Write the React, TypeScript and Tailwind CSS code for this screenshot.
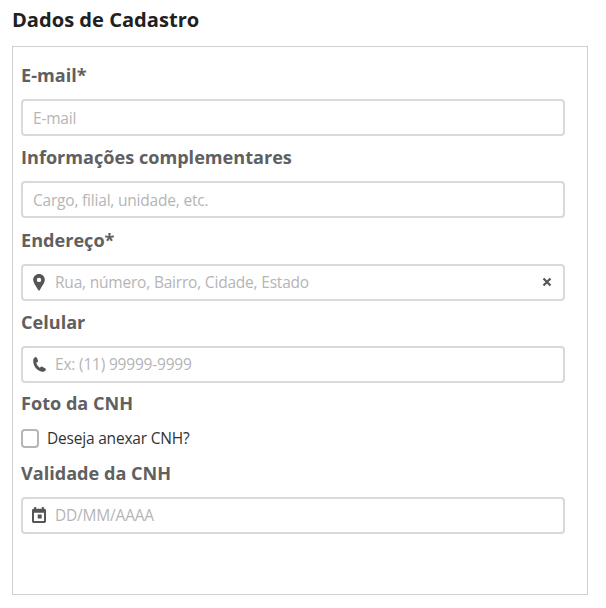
import React from 'react';

type IconName = 'pin' | 'phone' | 'calendar';

interface TextFieldProps {
  id: string;
  label: string;
  placeholder: string;
  icon?: IconName;
  clearable?: boolean;
}

const icons: Record<IconName, React.ReactNode> = {
  pin: (
    <svg viewBox="0 0 12 17" className="h-[17px] w-3" fill="#555555">
      <path fillRule="evenodd" d="M6 0C2.7 0 .2 2.500.2 5.700.2 9 3 11.600 4.700 15.300L6 17l1.300-1.700C9 11.600 11.800 9 11.800 5.700 11.800 2.500 9.300 0 6 0Zm0 3.700a2.200 2.200 0 1 1 0 4.400 2.200 2.200 0 0 1 0-4.400Z" />
    </svg>
  ),
  phone: (
    <svg viewBox="0 0 13 15" className="h-[15px] w-[13px]" fill="#555555">
      <path d="M2.700.1 4 .8l1 3c.1.600-.1 1-.5 1.200l-1.200.7c.5 2.100 1.700 3.900 3.500 5l1.200-.9c.4-.3.8-.3 1.200 0l3.200 1.700c.5.300.6.700.4 1.200-.7 1.500-1.900 2.200-3.600 2C4.400 14.100.4 9.500.2 4 .1 2 1.100.600 2.700.1Z" />
    </svg>
  ),
  calendar: (
    <svg viewBox="0 0 14 16" className="-ml-[1px] h-4 w-3.5" fill="#555555">
      <path fillRule="evenodd" d="M2.200 0h2v1.700h5.600V0h2v1.700h.5c1 0 1.700.7 1.700 1.700v10.900c0 1-.7 1.700-1.700 1.700H1.700C.7 16 0 15.300 0 14.300V3.400c0-1 .7-1.700 1.700-1.700h.5V0ZM2 5.800V14h10V5.800H2Zm3.700 1.700h4v4h-4v-4Z" />
    </svg>
  ),
};

function FieldLabel({ htmlFor, children }: { htmlFor: string; children: React.ReactNode }) {
  return (
    <label htmlFor={htmlFor} className="block h-6 text-[18.1px] leading-6 font-[680] text-[#606060]">
      {children}
    </label>
  );
}

function TextField({ id, label, placeholder, icon, clearable }: TextFieldProps) {
  return (
    <div>
      <FieldLabel htmlFor={id}>{label}</FieldLabel>
      <div className="mt-3 flex h-[37px] items-center rounded-[4px] border-2 border-[#d9d9d9] px-2.5">
        {icon && <span className="mr-2 flex w-3.5 shrink-0">{icons[icon]}</span>}
        <input
          id={id}
          type="text"
          placeholder={placeholder}
          className="min-w-0 flex-1 bg-transparent text-[15.5px] leading-5 tracking-[-0.2px] text-[#333333] outline-none placeholder:text-[#b5b5b5]"
        />
        {clearable && (
          <button type="button" aria-label="Limpar" className="mr-[1px]">
            <svg viewBox="0 0 10 10" className="h-2.5 w-2.5" stroke="#555555" strokeWidth="2.2">
              <path d="M1.500 1.500l7 7M8.500 1.500l-7 7" />
            </svg>
          </button>
        )}
      </div>
    </div>
  );
}

function App() {
  return (
    <div className="h-[608px] bg-white px-3 pt-2 font-['Open_Sans',sans-serif]">
      <h1 className="h-[38px] text-[20.1px] leading-[23px] font-[680] text-[#212121]">Dados de Cadastro</h1>

      <form className="flex h-[549px] w-[576px] flex-col gap-[9.25px] border border-[#d0d0d0] pt-4 pr-[22px] pl-2">
        <TextField id="email" label="E-mail*" placeholder="E-mail" />
        <TextField id="info" label="Informações complementares" placeholder="Cargo, filial, unidade, etc." />
        <TextField id="endereco" label="Endereço*" placeholder="Rua, número, Bairro, Cidade, Estado" icon="pin" clearable />
        <TextField id="celular" label="Celular" placeholder="Ex: (11) 99999-9999" icon="phone" />

        {/* CNH */}
        <div className="-mt-[1px]">
          <FieldLabel htmlFor="foto">Foto da CNH</FieldLabel>
          <div className="mt-3.5 flex h-[19px] items-center">
            <input
              id="foto"
              type="checkbox"
              className="h-[19px] w-[18px] appearance-none rounded-[4px] border-2 border-[#b5b5b5] bg-white"
            />
            <label htmlFor="foto" className="ml-2 pb-[1px] text-[15.5px] leading-5 tracking-[-0.2px] text-[#333333]">Deseja anexar CNH?</label>
          </div>
        </div>
        <div className="mt-[3.25px]">
          <TextField id="validade" label="Validade da CNH" placeholder="DD/MM/AAAA" icon="calendar" />
        </div>
      </form>
    </div>
  );
}

export default App;
